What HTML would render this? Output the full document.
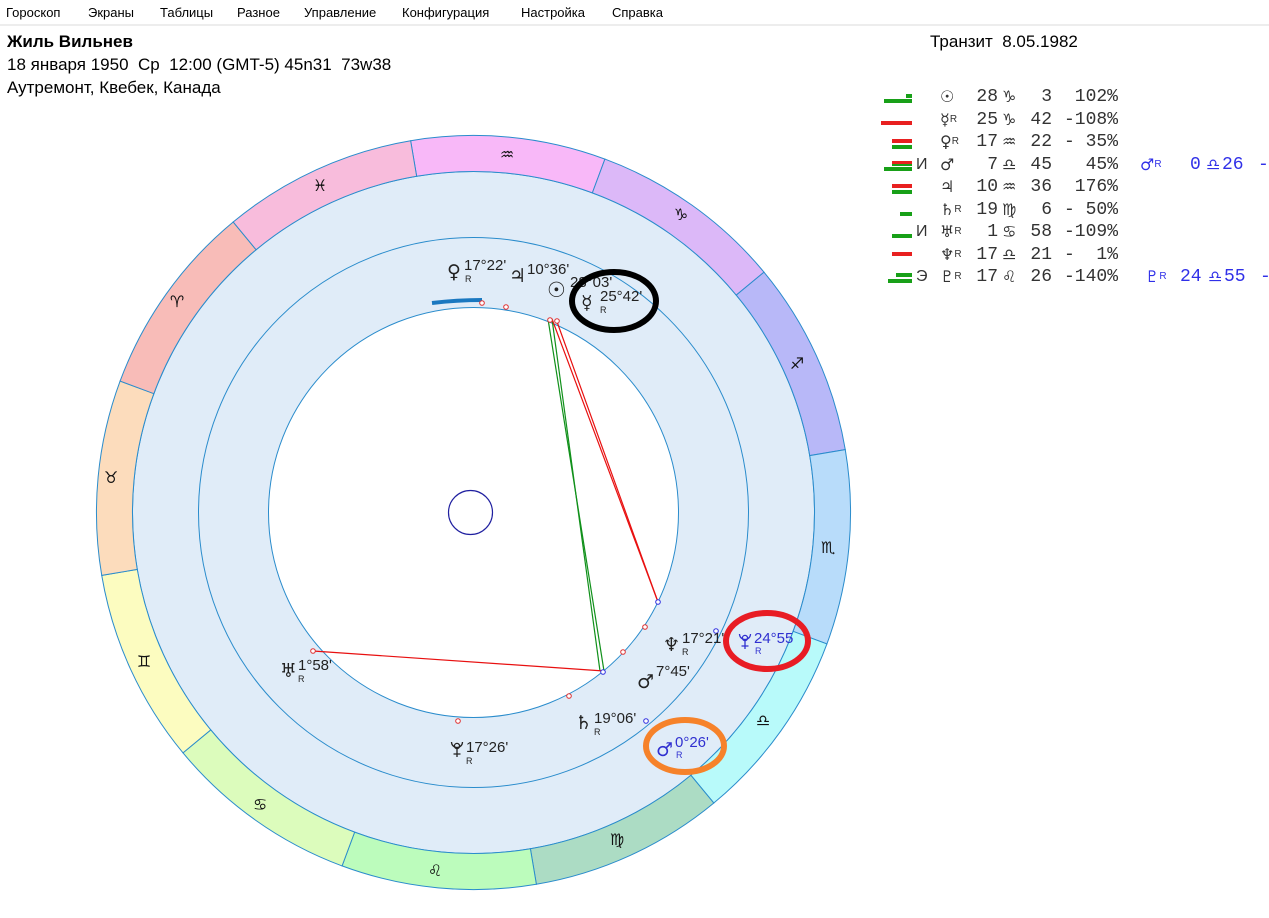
<!DOCTYPE html>
<html><head><meta charset="utf-8">
<style>
body{margin:0;width:1269px;height:918px;background:#fff;overflow:hidden;position:relative;font-family:"Liberation Sans","DejaVu Sans",sans-serif;}
.menu{position:absolute;left:0;top:0;width:1269px;height:24px;border-bottom:2px solid #ededed;font-size:13px;color:#000;}
.menu span{position:absolute;top:5px;}
.h{position:absolute;left:7px;font-size:17px;color:#000;}
.r{position:absolute;left:0;height:22px;width:1269px;font-family:"Liberation Mono",monospace;font-size:18px;color:#333;line-height:22px;white-space:pre;}
.r span{position:absolute;top:0;}
.g{font-family:"DejaVu Sans",sans-serif;font-size:16px;}
.sm{font-family:"Liberation Sans",sans-serif;font-size:10px;}
.deg{left:960px;width:38px;text-align:right;}
.sg{left:1002px;}
.mn{left:1026px;width:26px;text-align:right;}
.pc{left:1050px;width:68px;text-align:right;}
.bar{position:absolute;height:4px;}
.gr{background:#18a018}.rd{background:#e82020}
.blue{color:#3030e8}
</style></head><body>
<div class="menu">
<span style="left:6px">Гороскоп</span><span style="left:88px">Экраны</span><span style="left:160px">Таблицы</span><span style="left:237px">Разное</span><span style="left:304px">Управление</span><span style="left:402px">Конфигурация</span><span style="left:521px">Настройка</span><span style="left:612px">Справка</span>
</div>
<div class="h" style="top:32px;font-weight:bold;">Жиль Вильнев</div>
<div class="h" style="top:55px;">18 января 1950&nbsp; Ср&nbsp; 12:00 (GMT-5) 45n31&nbsp; 73w38</div>
<div class="h" style="top:78px;">Аутремонт, Квебек, Канада</div>
<div class="h" style="left:930px;top:32px;">Транзит&nbsp; 8.05.1982</div>

<div class="bar gr" style="left:884px;top:99px;width:28px"></div><div class="bar gr" style="left:906px;top:94px;width:6px"></div>
<div class="bar rd" style="left:881px;top:121px;width:31px"></div>
<div class="bar rd" style="left:892px;top:139px;width:20px"></div><div class="bar gr" style="left:892px;top:145px;width:20px"></div>
<div class="bar gr" style="left:884px;top:167px;width:28px"></div><div class="bar rd" style="left:892px;top:161px;width:20px"></div><div class="bar gr" style="left:892px;top:164px;width:20px;height:2px"></div>
<div class="bar rd" style="left:892px;top:184px;width:20px"></div><div class="bar gr" style="left:892px;top:190px;width:20px"></div>
<div class="bar gr" style="left:900px;top:212px;width:12px"></div>
<div class="bar gr" style="left:892px;top:234px;width:20px"></div>
<div class="bar rd" style="left:892px;top:252px;width:20px"></div>
<div class="bar gr" style="left:888px;top:279px;width:24px"></div><div class="bar gr" style="left:896px;top:273px;width:16px"></div>

<div class="r" style="top:86px"><span class="g" style="left:940px">☉</span><span class="deg">28</span><span class="sg g">♑</span><span class="mn">3</span><span class="pc">102%</span></div>
<div class="r" style="top:109px"><span class="g" style="left:940px">☿<span class="sm">R</span></span><span class="deg">25</span><span class="sg g">♑</span><span class="mn">42</span><span class="pc">-108%</span></div>
<div class="r" style="top:131px"><span class="g" style="left:940px">♀<span class="sm">R</span></span><span class="deg">17</span><span class="sg g">♒</span><span class="mn">22</span><span class="pc">- 35%</span></div>
<div class="r" style="top:154px"><span style="left:916px;font-family:'Liberation Sans';font-size:16px">И</span><span class="g" style="left:940px">♂</span><span class="deg">7</span><span class="sg g">♎</span><span class="mn">45</span><span class="pc">45%</span>
<span class="g blue" style="left:1140px">♂<span class="sm">R</span></span><span class="blue" style="left:1190px">0</span><span class="g blue" style="left:1206px">♎</span><span class="blue" style="left:1222px">26</span><span class="blue" style="left:1258px">-</span></div>
<div class="r" style="top:176px"><span class="g" style="left:940px">♃</span><span class="deg">10</span><span class="sg g">♒</span><span class="mn">36</span><span class="pc">176%</span></div>
<div class="r" style="top:199px"><span class="g" style="left:940px">♄<span class="sm">R</span></span><span class="deg">19</span><span class="sg g">♍</span><span class="mn">6</span><span class="pc">- 50%</span></div>
<div class="r" style="top:221px"><span style="left:916px;font-family:'Liberation Sans';font-size:16px">И</span><span class="g" style="left:940px">♅<span class="sm">R</span></span><span class="deg">1</span><span class="sg g">♋</span><span class="mn">58</span><span class="pc">-109%</span></div>
<div class="r" style="top:244px"><span class="g" style="left:940px">♆<span class="sm">R</span></span><span class="deg">17</span><span class="sg g">♎</span><span class="mn">21</span><span class="pc">-  1%</span></div>
<div class="r" style="top:266px"><span style="left:916px;font-family:'Liberation Sans';font-size:16px">Э</span><span class="g" style="left:940px">♇<span class="sm">R</span></span><span class="deg">17</span><span class="sg g">♌</span><span class="mn">26</span><span class="pc">-140%</span>
<span class="g blue" style="left:1145px">♇<span class="sm">R</span></span><span class="blue" style="left:1180px">24</span><span class="g blue" style="left:1208px">♎</span><span class="blue" style="left:1224px">55</span><span class="blue" style="left:1260px">-</span></div>

<svg width="1269" height="918" style="position:absolute;left:0;top:0" font-family="Liberation Sans, DejaVu Sans, sans-serif">
<defs>
<path id="w" d="M-97.6,-364.2 A377,377 0 0 1 97.6,-364.2 L88.3,-329.4 A341,341 0 0 0 -88.3,-329.4 Z" stroke="#2a8ccc" stroke-width="1"/>
<g id="pl" fill="none" stroke-width="1.3"><circle cx="0" cy="-4" r="2.6"/><path d="M-5.5,-8 A5.5,5.5 0 0 0 5.5,-8 M0,-2.5 V7 M-3.5,4 H3.5"/></g>
</defs>
<g transform="translate(473.5,512.5)">
<circle r="341" fill="#e0ecf8" stroke="#2a8ccc" stroke-width="1"/>
<use href="#w" transform="rotate(5.4)" fill="#f8b8f8"/>
<use href="#w" transform="rotate(35.4)" fill="#dcb8f8"/>
<use href="#w" transform="rotate(65.4)" fill="#b8b8f8"/>
<use href="#w" transform="rotate(95.4)" fill="#b8dcfa"/>
<use href="#w" transform="rotate(125.4)" fill="#b8fafa"/>
<use href="#w" transform="rotate(155.4)" fill="#acdcc4"/>
<use href="#w" transform="rotate(185.4)" fill="#bcfcbc"/>
<use href="#w" transform="rotate(215.4)" fill="#dcfcbc"/>
<use href="#w" transform="rotate(245.4)" fill="#fcfcc0"/>
<use href="#w" transform="rotate(275.4)" fill="#fcdcbc"/>
<use href="#w" transform="rotate(305.4)" fill="#f8bcb8"/>
<use href="#w" transform="rotate(335.4)" fill="#f8bcdc"/>
<circle r="275" fill="#e0ecf8" stroke="#2a8ccc" stroke-width="1"/>
<circle r="205" fill="#fff" stroke="#2a8ccc" stroke-width="1"/>
<circle r="22" cx="-3" fill="none" stroke="#2020a0" stroke-width="1.2"/>
</g>
<g font-family="DejaVu Sans" font-size="16" text-anchor="middle" fill="#111">
<text x="507" y="160">♒</text>
<text x="320" y="191">♓</text>
<text x="177" y="307">♈</text>
<text x="111" y="483">♉</text>
<text x="144" y="667">♊</text>
<text x="260" y="810">♋</text>
<text x="435" y="876">♌</text>
<text x="617" y="845">♍</text>
<text x="763" y="726">♎</text>
<text x="828" y="553">♏</text>
<text x="797" y="369">♐</text>
<text x="681" y="220">♑</text>
</g>
<g fill="none" stroke-width="1.2">
<line x1="548" y1="319" x2="604" y2="671" stroke="#10901a"/>
<line x1="552" y1="319" x2="600" y2="671" stroke="#10901a"/>
<line x1="552" y1="319" x2="658" y2="602" stroke="#e81010"/>
<line x1="556" y1="319" x2="658" y2="602" stroke="#e81010"/>
<line x1="313" y1="651" x2="604" y2="671" stroke="#e81010"/>
</g>
<path d="M432,303 Q457,300 482,300" fill="none" stroke="#1a78c0" stroke-width="4"/>
<g fill="#fff" stroke-width="1">
<circle cx="482" cy="303" r="2.3" stroke="#e03030"/>
<circle cx="506" cy="307" r="2.3" stroke="#e03030"/>
<circle cx="550" cy="320" r="2.3" stroke="#e03030"/>
<circle cx="557" cy="321" r="2.3" stroke="#e03030"/>
<circle cx="658" cy="602" r="2.3" stroke="#3030e0"/>
<circle cx="645" cy="627" r="2.3" stroke="#e03030"/>
<circle cx="623" cy="652" r="2.3" stroke="#e03030"/>
<circle cx="603" cy="672" r="2.3" stroke="#3030e0"/>
<circle cx="569" cy="696" r="2.3" stroke="#e03030"/>
<circle cx="458" cy="721" r="2.3" stroke="#e03030"/>
<circle cx="313" cy="651" r="2.3" stroke="#e03030"/>
<circle cx="646" cy="721" r="2.3" stroke="#3030e0"/>
<circle cx="716" cy="631" r="2.3" stroke="#3030e0"/>
</g>
<g font-size="15" fill="#222">
<text x="447" y="278" font-family="DejaVu Sans" font-size="19">♀</text><text x="464" y="270">17°22'</text><text x="465" y="282" font-size="9">R</text>
<text x="509" y="282" font-family="DejaVu Sans" font-size="19">♃</text><text x="527" y="274">10°36'</text>
<text x="547" y="297" font-family="DejaVu Sans" font-size="21">☉</text><text x="570" y="287">28°03'</text>
<text x="581" y="309" font-family="DejaVu Sans" font-size="19">☿</text><text x="600" y="301">25°42'</text><text x="600" y="313" font-size="9">R</text>
<text x="663" y="651" font-family="DejaVu Sans" font-size="19">♆</text><text x="682" y="643">17°21'</text><text x="682" y="655" font-size="9">R</text>
<text x="637" y="688" font-family="DejaVu Sans" font-size="19">♂</text><text x="656" y="676">7°45'</text>
<text x="575" y="729" font-family="DejaVu Sans" font-size="19">♄</text><text x="594" y="723">19°06'</text><text x="594" y="735" font-size="9">R</text>
<text x="280" y="677" font-family="DejaVu Sans" font-size="19">♅</text><text x="298" y="670">1°58'</text><text x="298" y="682" font-size="9">R</text>
<use href="#pl" x="457" y="750" stroke="#222"/><text x="466" y="752">17°26'</text><text x="466" y="764" font-size="9">R</text>
</g>
<g font-size="15" fill="#3030d0">
<use href="#pl" x="745" y="642" stroke="#3030d0"/><text x="754" y="643">24°55</text><text x="755" y="654" font-size="9">R</text>
<text x="656" y="756" font-family="DejaVu Sans" font-size="19">♂</text><text x="675" y="747">0°26'</text><text x="676" y="758" font-size="9">R</text>
</g>
<ellipse cx="614" cy="301" rx="42" ry="29" fill="none" stroke="#000" stroke-width="6"/>
<ellipse cx="767" cy="641" rx="41" ry="28" fill="none" stroke="#e81c24" stroke-width="6"/>
<ellipse cx="685" cy="746" rx="39" ry="26" fill="none" stroke="#f6822a" stroke-width="6"/>
</svg>
</body></html>
